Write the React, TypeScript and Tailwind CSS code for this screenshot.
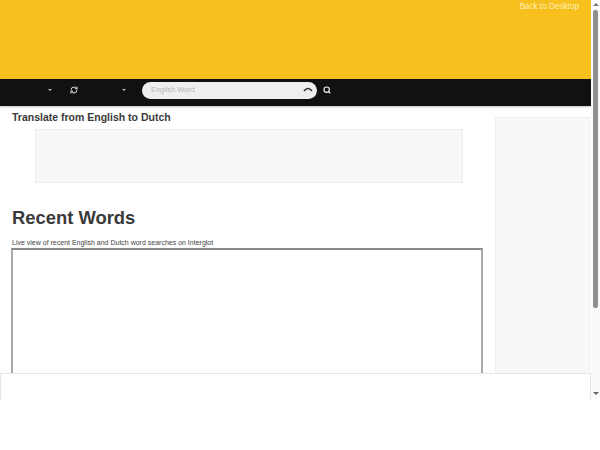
import { RefreshCw, Search } from "lucide-react";

const Caret = ({ className = "" }: { className?: string }) => (
  <span className={`w-0 h-0 border-x-[2px] border-x-transparent border-t-[2px] border-t-[#bbb] ${className}`} />
);

export default function App() {
  return (
    <div className="w-[600px] h-[450px] bg-white overflow-hidden font-['Liberation_Sans',sans-serif] text-[#3a3a3a]">
      <div className="relative flex h-[399px] overflow-hidden">
        <div className="w-[591px] shrink-0 flex flex-col">
          <header className="h-[79px] bg-[#f8c01e] flex justify-end shrink-0">
            <span className="text-[8.2px] leading-[12px] pt-[0.5px] text-[#fdeeb8] mr-[12px]">Back to Desktop</span>
          </header>
          <nav className="h-[27px] shrink-0 bg-[#111] flex items-center pb-[5px] shadow-[0_1px_2px_rgba(0,0,0,0.25)]">
            <Caret className="ml-[48px]" />
            <RefreshCw size={8} strokeWidth={3} color="#ddd" className="ml-[18px]" />
            <Caret className="ml-[44px]" />
            <div className="ml-[16px] w-[175px] h-[17px] rounded-full bg-[#eee] flex items-center justify-between pl-[9px] pr-[4px]">
              <span className="text-[7.4px] text-[#b5b5b5]">English Word</span>
              <svg width="10" height="5" viewBox="0 0 10 5" className="mb-[2px]">
                <path d="M1 4 Q5 -1 9 4" fill="none" stroke="#333" strokeWidth="1.6" />
              </svg>
            </div>
            <Search size={8} strokeWidth={3.5} color="#eee" className="ml-[6px]" />
          </nav>
          <div className="flex flex-1 min-h-0 pl-[12px]">
            <main className="w-[470px] shrink-0">
              <h2 className="text-[10.5px] font-bold leading-[14px] mt-[4px]">Translate from English to Dutch</h2>
              <div className="ml-[23px] mt-[5px] w-[428px] h-[54px] bg-[#f8f8f8] border border-[#eee]" />
              <h1 className="text-[18.4px] font-bold leading-[24px] mt-[23px]">Recent Words</h1>
              <p className="text-[7px] leading-[10px] mt-[8px] text-[#444]">Live view of recent English and Dutch word searches on Interglot</p>
              <div className="-ml-[1px] mt-[0px] w-[472px] h-[200px] border-x-2 border-t-2 border-x-[#aaa] border-t-[#888] box-border bg-white" />
            </main>
            <aside className="ml-[13px] mt-[11px] w-[95px] bg-[#f8f8f8] border-x border-t border-[#f0f0f0]" />
          </div>
        </div>
        <div className="w-[9px] shrink-0 bg-[#fafafa] flex flex-col items-center">
          <span className="mt-[3px] w-0 h-0 border-x-[3px] border-x-transparent border-b-[3px] border-b-[#777]" />
          <div className="mt-[4px] w-[5px] h-[298px] rounded-[2px] bg-[#8f8f8f]" />
          <span className="mt-auto mb-[4px] w-0 h-0 border-x-[3px] border-x-transparent border-t-[3px] border-t-[#666]" />
        </div>
        <div className="absolute left-0 top-[373px] w-[591px] h-[26px] bg-white border-x border-t border-[#e6e6e6]" />
      </div>
    </div>
  );
}
